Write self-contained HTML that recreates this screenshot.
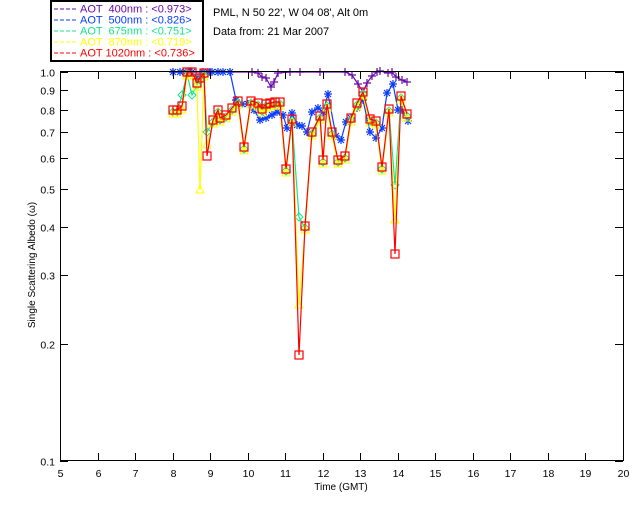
<!DOCTYPE html>
<html><head><meta charset="utf-8"><style>
html,body{margin:0;padding:0;background:#fff;width:640px;height:512px;overflow:hidden}
svg{display:block;font-family:"Liberation Sans",sans-serif}
</style></head><body>
<svg id="s" width="640" height="512" xmlns="http://www.w3.org/2000/svg">
<rect x="51" y="1" width="152" height="60" fill="none" stroke="#000" stroke-width="2"/>
<g font-size="11">
<line x1="54" y1="9" x2="76" y2="9" stroke="#6a0aa8" stroke-dasharray="4,2"/><text x="80" y="12.5" fill="#6a0aa8" xml:space="preserve">AOT  400nm : &lt;0.973&gt;</text>
<line x1="54" y1="20" x2="76" y2="20" stroke="#0a3cff" stroke-dasharray="4,2"/><text x="80" y="23.5" fill="#0a3cff" xml:space="preserve">AOT  500nm : &lt;0.826&gt;</text>
<line x1="54" y1="31" x2="76" y2="31" stroke="#14e68c" stroke-dasharray="4,2"/><text x="80" y="34.5" fill="#14e68c" xml:space="preserve">AOT  675nm : &lt;0.751&gt;</text>
<line x1="54" y1="42" x2="76" y2="42" stroke="#ffff00" stroke-dasharray="4,2"/><text x="80" y="45.5" fill="#ffff00" xml:space="preserve">AOT  870nm : &lt;0.719&gt;</text>
<line x1="54" y1="53" x2="76" y2="53" stroke="#ff0000" stroke-dasharray="4,2"/><text x="80" y="56.5" fill="#ff0000" xml:space="preserve">AOT 1020nm : &lt;0.736&gt;</text>
</g>
<text x="213" y="16" font-size="11">PML, N 50 22', W 04 08', Alt 0m</text>
<text x="213" y="35" font-size="11">Data from: 21 Mar 2007</text>
<g id="data"></g>
<rect x="60.5" y="71.5" width="563" height="389" fill="none" stroke="#000"/>
<g id="ax" stroke="#000"></g>
<g id="lab" font-size="10.5"></g>
<text x="341" y="490" font-size="10" text-anchor="middle">Time (GMT)</text>
<text transform="translate(35,265) rotate(-90)" font-size="10" text-anchor="middle">Single Scattering Albedo (ω)</text>
</svg>
<script>
var NS="http://www.w3.org/2000/svg";
function el(p,n,a,t){var e=document.createElementNS(NS,n);for(var k in a)e.setAttribute(k,a[k]);if(t)e.textContent=t;p.appendChild(e);return e;}
var ax=document.getElementById('ax'),lab=document.getElementById('lab'),D=document.getElementById('data');
for(var h=5;h<=20;h++){var x=60+(h-5)*37.53;x=Math.round(x)+.5;
 el(ax,'line',{x1:x,y1:461,x2:x,y2:453});el(ax,'line',{x1:x,y1:71,x2:x,y2:79});
 el(lab,'text',{x:x,y:477,'text-anchor':'middle'},''+h);}
for(var v=1;v<=10;v++){var y=Math.round(461-389*Math.log10(v))+.5;
 el(ax,'line',{x1:60,y1:y,x2:68,y2:y});el(ax,'line',{x1:623,y1:y,x2:615,y2:y});
 el(lab,'text',{x:55,y:y+4,'text-anchor':'end'},(v/10).toFixed(1));}
var rx=[173,177,182,187,192,197,200,204,207,213,218,220,226,232,238,244,251,258,262,266,270,275,280,286,292,299,305,312,320,323,327,332,338,345,351,357,363,370,376,382,389,395,401,407];
var ry=[110,110,106,72,72,83,78,73,156,120,110,118,115,108,101,147,101,103,109,104,103,102,102,169,119,355,226,132,116,160,104,132,160,156,118,103,92,119,121,167,109,254,96,114];
function series(xs,ys,col,mk){
 el(D,'polyline',{points:xs.map(function(x,i){return x+','+ys[i]}).join(' '),fill:'none',stroke:col,'stroke-width':1.2});
 xs.forEach(function(x,i){var y=ys[i];
  if(mk=='sq')el(D,'rect',{x:x-4,y:y-4,width:8,height:8,fill:'none',stroke:col,'stroke-width':1.2});
  else if(mk=='tri')el(D,'polygon',{points:(x-4)+','+(y+3)+' '+(x+4)+','+(y+3)+' '+x+','+(y-5),fill:'none',stroke:col});
  else if(mk=='dia')el(D,'polygon',{points:x+','+(y-4)+' '+(x+4)+','+y+' '+x+','+(y+4)+' '+(x-4)+','+y,fill:'none',stroke:col});
  else if(mk=='ast')el(D,'path',{d:'M'+(x-4)+' '+y+'h8M'+x+' '+(y-4)+'v8M'+(x-3)+' '+(y-3)+'l6 6M'+(x+3)+' '+(y-3)+'l-6 6',stroke:col,'stroke-width':1.2});
  else el(D,'path',{d:'M'+(x-4)+' '+y+'h8M'+x+' '+(y-4)+'v8',stroke:col,'stroke-width':1.2});
 });}
var yy=ry.map(function(y,i){return y+4});yy[6]=190;yy[25]=305;yy[41]=220;yy[8]=145;
var gy=ry.map(function(y,i){return y+2});gy[2]=95;gy[4]=95;gy[25]=217;gy[41]=185;gy[8]=132;
var bx=[173,180,186,192,198,203,208,212,218,223,230,236,242,248,254,260,266,272,277,283,287,292,297,302,307,312,318,323,328,336,341,346,351,357,363,370,376,382,387,393,398,402,408];
var by=[72,72,72,72,78,72,72,72,72,72,72,100,104,104,110,120,118,115,112,115,128,113,125,126,132,112,108,112,94,136,140,122,118,108,100,132,138,128,93,84,110,110,121];
var px=[173,190,210,230,252,258,262,266,271,274,278,290,300,320,345,352,358,363,367,372,377,380,388,392,396,402,407];
var py=[72,72,72,72,72,73,77,78,87,82,73,72,72,72,72,75,84,92,83,76,72,71,73,72,77,80,82];
series(px,py,'#6a0aa8','plus');
series(bx,by,'#0a3cff','ast');
series(rx,gy,'#14e68c','dia');
series(rx,yy,'#ffff00','tri');
series(rx,ry,'#ff0000','sq');
</script>
</body></html>
